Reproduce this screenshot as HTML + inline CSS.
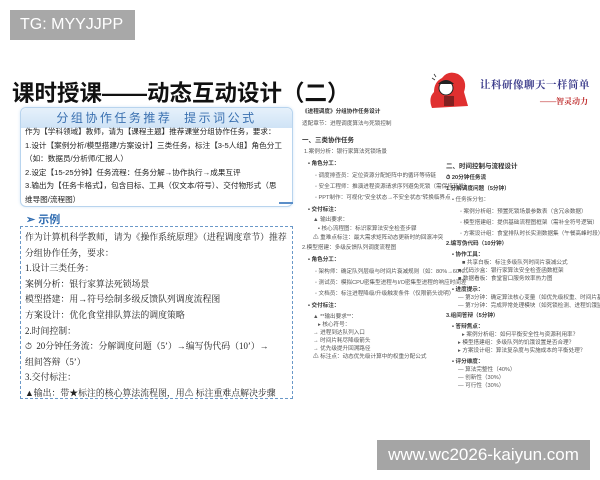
<!DOCTYPE html>
<html><head><meta charset="utf-8"><style>
*{margin:0;padding:0;box-sizing:border-box}
body{width:600px;height:480px;background:#fff;position:relative;overflow:hidden;font-family:"Liberation Sans","Noto Sans CJK SC",sans-serif}
.a{position:absolute;white-space:nowrap}
.tg{left:10px;top:10px;width:125px;height:30px;background:#a8a8a8;color:#fff;font-size:16px;line-height:30px;padding-left:10px}
.title{left:12px;top:76px;font-size:22.5px;font-weight:bold;color:#111;letter-spacing:0}
.box1{left:20px;top:107px;width:273px;height:100px;border:1px solid #b8d4ee;border-radius:6px;background:#fff;box-shadow:0 0 3px #d8e8f6}
.hdr{position:absolute;left:0;top:0;width:100%;height:20px;background:linear-gradient(#e6f1fb,#cfe3f6);border-radius:6px 6px 0 0;color:#3a70b0;font-size:12px;line-height:20px;text-align:center;letter-spacing:2.5px}
.b1{position:absolute;left:4px;top:17px;font-size:7.6px;color:#222;line-height:13.5px}
.ex{left:26px;top:211px;font-size:11px;font-weight:bold;color:#2e6bb0}
.box2{left:20px;top:226px;width:273px;height:173px;border:1.5px dashed #6a98c8}
.b2{position:absolute;left:4px;top:3px;font-family:"Liberation Serif","Noto Serif CJK SC",serif;font-size:8.9px;color:#222;line-height:15.6px}
.doc{font-size:5.6px;color:#555;line-height:1}
.dh{font-weight:bold;color:#333}
.slog{left:480px;top:77px;font-family:"Liberation Serif","Noto Serif CJK SC",serif;font-weight:bold;font-size:10.5px;color:#3a3a8a;letter-spacing:0.5px}
.slog2{left:540px;top:96px;font-family:"Liberation Serif","Noto Serif CJK SC",serif;font-size:8px;color:#c03030;font-weight:bold}
.wm{left:377px;top:440px;width:213px;height:30px;background:#a5a5a5;color:#fff;font-size:17px;line-height:30px;text-align:center}
</style></head><body>
<div class="a tg">TG: MYYJJPP</div>
<div class="a title">课时授课——动态互动设计（二）</div>

<div class="a box1"><div class="hdr">分组协作任务推荐&nbsp; 提示词公式</div>
<div class="b1">作为【学科领域】教师，请为【课程主题】推荐课堂分组协作任务，要求：<br>1.设计【案例分析/模型搭建/方案设计】三类任务，标注【3-5人组】角色分工<br>（如：数据员/分析师/汇报人）<br>2.设定【15-25分钟】任务流程：任务分解→协作执行→成果互评<br>3.输出为【任务卡格式】，包含目标、工具（仅文本/符号）、交付物形式（思<br>维导图/流程图）</div>
<div style="position:absolute;left:258px;top:94px;width:14px;height:2px;background:#5a8ec8"></div>
</div>

<div class="a ex">➢ 示例</div>
<div class="a box2"><div class="b2">作为计算机科学教师，请为《操作系统原理》（进程调度章节）推荐<br>分组协作任务，要求：<br>1.设计三类任务：<br>案例分析：银行家算法死锁场景<br>模型搭建：用→符号绘制多级反馈队列调度流程图<br>方案设计：优化食堂排队算法的调度策略<br>2.时间控制：<br>⏱&nbsp; 20分钟任务流：分解调度问题（5’）→编写伪代码（10’）→<br>组间答辩（5’）<br>3.交付标注：<br>▲输出：带★标注的核心算法流程图，用⚠ 标注重难点解决步骤</div></div>

<svg class="a" style="left:428px;top:70px" width="42" height="40" viewBox="0 0 42 40">
<path d="M14 8 Q20 0 30 4 Q40 10 36 22 L40 36 L4 38 Q0 28 6 22 Q6 12 14 8Z" fill="#e03030"/>
<circle cx="18" cy="18" r="7" fill="#fff" stroke="#222" stroke-width="1"/>
<path d="M10 14 Q18 6 26 14" fill="#222"/>
<rect x="16" y="26" width="10" height="10" fill="#802020"/>
<path d="M4 8 l3 2 M6 4 l2 3" stroke="#333" stroke-width="0.8"/>
</svg>
<div class="a slog">让科研像聊天一样简单</div>
<div class="a slog2">——智灵动力</div>

<div class="a doc dh" style="left:302px;top:110px">《进程调度》分组协作任务设计</div>
<div class="a doc" style="left:302px;top:122px">适配章节：进程调度算法与死锁控制</div>
<div class="a doc dh" style="left:302px;top:138px;font-size:6.5px">一、三类协作任务</div>
<div class="a doc" style="left:304px;top:150px">1.案例分析：银行家算法死锁场景</div>
<div class="a doc dh" style="left:308px;top:162px">• 角色分工：</div>
<div class="a doc" style="left:315px;top:174px">◦ 调度排查员：定位资源分配矩阵中的循环等待链</div>
<div class="a doc" style="left:315px;top:185px">◦ 安全工程师：推演进程资源请求序列避免死锁（需保持开发）</div>
<div class="a doc" style="left:315px;top:196px">◦ PPT制作：可视化“安全状态→不安全状态”转换临界点</div>
<div class="a doc dh" style="left:308px;top:208px">• 交付标注：</div>
<div class="a doc" style="left:313px;top:218px">▲ 输出要求：</div>
<div class="a doc" style="left:318px;top:227px">▪ 核心流程图：标识家算法安全检查步骤</div>
<div class="a doc" style="left:313px;top:236px">⚠ 重难点标注：最大需求矩阵动态更新时的回滚冲突</div>
<div class="a doc" style="left:302px;top:246px">2.模型搭建：多级反馈队列调度流程图</div>
<div class="a doc dh" style="left:308px;top:258px">• 角色分工：</div>
<div class="a doc" style="left:315px;top:270px">◦ 架构师：确定队列层级与时间片衰减规则（如：80%→60%→</div>
<div class="a doc" style="left:315px;top:281px">◦ 测试员：模拟CPU密集型进程与I/O密集型进程的响应时间差</div>
<div class="a doc" style="left:315px;top:292px">◦ 文档员：标注进程降级/升级触发条件（仅限箭头说明）</div>
<div class="a doc dh" style="left:308px;top:304px">• 交付标注：</div>
<div class="a doc" style="left:313px;top:315px">▲ **输出要求**：</div>
<div class="a doc" style="left:318px;top:323px">▸ 核心符号：</div>
<div class="a doc" style="left:313px;top:331px">→ 进程到达队列入口</div>
<div class="a doc" style="left:313px;top:339px">→ 时间片耗尽降级箭头</div>
<div class="a doc" style="left:313px;top:347px">→ 优先级提升回溯路径</div>
<div class="a doc" style="left:313px;top:355px">⚠ 标注点：动态优先级计算中的权重分配公式</div>

<div class="a doc dh" style="left:446px;top:164px;font-size:6.5px">二、时间控制与流程设计</div>
<div class="a doc dh" style="left:446px;top:176px">⏱ 20分钟任务流</div>
<div class="a doc dh" style="left:446px;top:187px">1.分解调度问题（5分钟）</div>
<div class="a doc" style="left:452px;top:198px">• 任务拆分包：</div>
<div class="a doc" style="left:460px;top:210px">◦ 案例分析组：预置死锁场景参数表（含冗余数据）</div>
<div class="a doc" style="left:460px;top:221px">◦ 模型搭建组：提供基础流程图框架（需补全符号逻辑）</div>
<div class="a doc" style="left:460px;top:232px">◦ 方案设计组：食堂排队时长实测数据集（午餐高峰时段）</div>
<div class="a doc dh" style="left:446px;top:242px">2.编写伪代码（10分钟）</div>
<div class="a doc dh" style="left:452px;top:253px">• 协作工具：</div>
<div class="a doc" style="left:462px;top:261px">■ 共享白板：标注多级队列时间片衰减公式</div>
<div class="a doc" style="left:458px;top:269px">■ 代码沙盒：银行家算法安全检查函数框架</div>
<div class="a doc" style="left:458px;top:277px">■ 数据看板：食堂窗口服务效率热力图</div>
<div class="a doc dh" style="left:452px;top:288px">• 进度提示：</div>
<div class="a doc" style="left:458px;top:296px">— 第3分钟：确定算法核心变量（如优先级权重、时间片基数）</div>
<div class="a doc" style="left:458px;top:304px">— 第7分钟：完成异常处理模块（如死锁检测、进程饥饿监控）</div>
<div class="a doc dh" style="left:446px;top:314px">3.组间答辩（5分钟）</div>
<div class="a doc dh" style="left:452px;top:325px">• 答辩焦点：</div>
<div class="a doc" style="left:462px;top:333px">▸ 案例分析组：如何平衡安全性与资源利用率？</div>
<div class="a doc" style="left:458px;top:341px">▸ 模型搭建组：多级队列的饥饿设置是否合理？</div>
<div class="a doc" style="left:458px;top:349px">▸ 方案设计组：算法复杂度与实施成本的平衡处理？</div>
<div class="a doc dh" style="left:452px;top:360px">• 评分维度：</div>
<div class="a doc" style="left:458px;top:368px">— 算法完整性（40%）</div>
<div class="a doc" style="left:458px;top:376px">— 创新性（30%）</div>
<div class="a doc" style="left:458px;top:384px">— 可行性（30%）</div>

<div class="a wm">www.wc2026-kaiyun.com</div>
</body></html>
